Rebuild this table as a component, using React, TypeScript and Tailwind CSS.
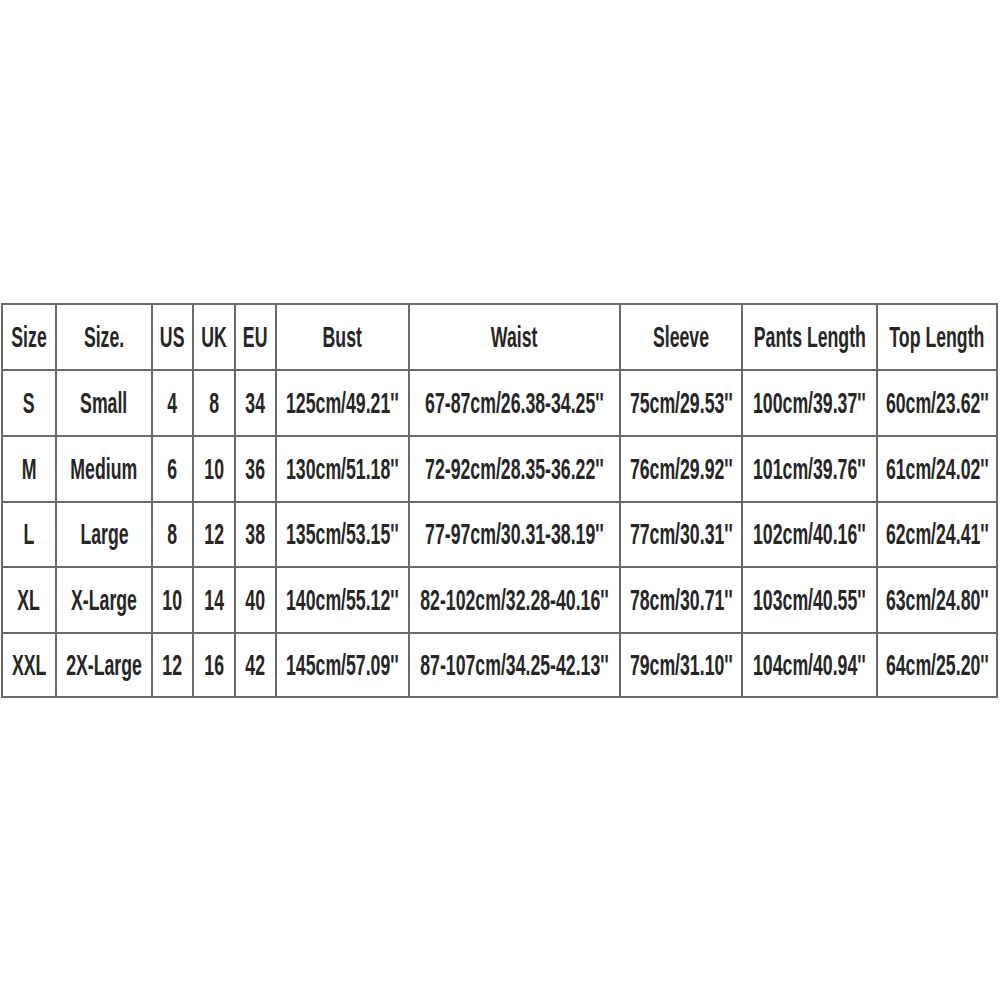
const cols = "grid-cols-[54px_96px_41px_42px_41px_133px_211px_122px_135px_120px]"

const header = ["Size", "Size.", "US", "UK", "EU", "Bust", "Waist", "Sleeve", "Pants Length", "Top Length"]

const rows = [
    ["S", "Small", "4", "8", "34", "125cm/49.21''", "67-87cm/26.38-34.25''", "75cm/29.53''", "100cm/39.37''", "60cm/23.62''"],
    ["M", "Medium", "6", "10", "36", "130cm/51.18''", "72-92cm/28.35-36.22''", "76cm/29.92''", "101cm/39.76''", "61cm/24.02''"],
    ["L", "Large", "8", "12", "38", "135cm/53.15''", "77-97cm/30.31-38.19''", "77cm/30.31''", "102cm/40.16''", "62cm/24.41''"],
    ["XL", "X-Large", "10", "14", "40", "140cm/55.12''", "82-102cm/32.28-40.16''", "78cm/30.71''", "103cm/40.55''", "63cm/24.80''"],
    ["XXL", "2X-Large", "12", "16", "42", "145cm/57.09''", "87-107cm/34.25-42.13''", "79cm/31.10''", "104cm/40.94''", "64cm/25.20''"],
]

// row heights include the 2px bottom line
const heights = ["h-[66px]", "h-[66px]", "h-[66px]", "h-[65px]", "h-[66px]", "h-[64px]"]

const Cell = ({ text }: { text: string }) => (
    <div className="flex items-center justify-center overflow-visible whitespace-nowrap border-r-2 border-b-2 border-[#6b6b6b]">
        <span className="inline-block origin-center scale-x-[0.61] text-[29px] leading-none font-bold text-[#262626]">
            {text}
        </span>
    </div>
)

export default function App() {
    return (
        <div className="w-[1000px] h-[1000px] bg-white font-['Liberation_Sans',Arial,sans-serif]">
            <div className="pt-[303px] pl-[1px]">
                <div className="w-max border-l-2 border-t-2 border-[#6b6b6b]">
                    {[header, ...rows].map((r, i) => (
                        <div key={i} className={`grid ${cols} ${heights[i]}`}>
                            {r.map((t, j) => <Cell key={j} text={t} />)}
                        </div>
                    ))}
                </div>
            </div>
        </div>
    )
}
